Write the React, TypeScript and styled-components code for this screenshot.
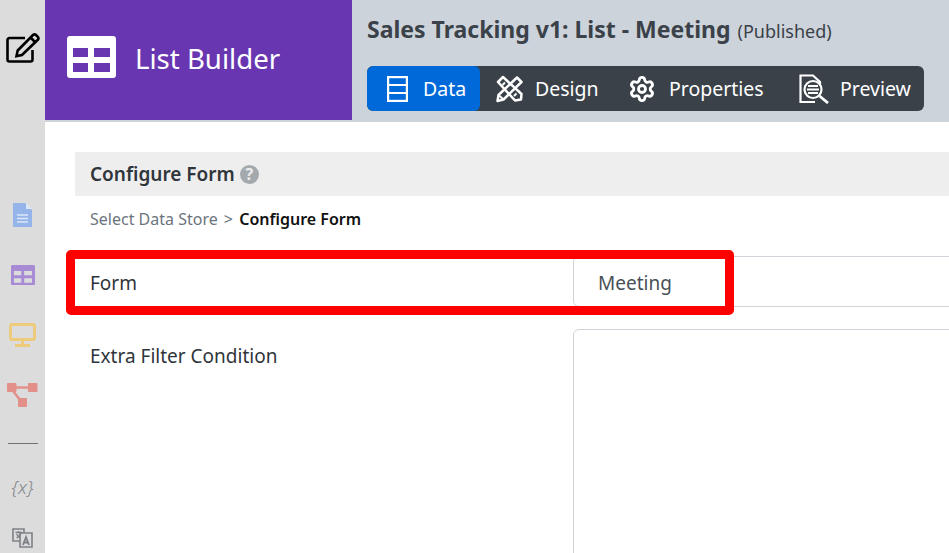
import React from 'react'
import styled, { createGlobalStyle } from 'styled-components'
import { Settings } from 'lucide-react'

const GlobalStyle = createGlobalStyle`
    html, body {
        margin: 0;
        padding: 0;
        height: 100%;
        overflow: hidden;
        background: #fff;
        font-family: 'Noto Sans', 'Open Sans', Arial, sans-serif;
    }
    * {
        box-sizing: border-box;
    }
`

const tabs = [
    { id: 'data', title: 'Data', width: 113, pad: 20, gap: 15, active: true },
    { id: 'design', title: 'Design', width: 135, pad: 16, gap: 12 },
    { id: 'properties', title: 'Properties', width: 163, pad: 13, gap: 13 },
    { id: 'preview', title: 'Preview', width: 146, pad: 21, gap: 10 },
]

const TableGlyph = ({ width, color }: { width: number; color: string }) => (
    <svg width={width} height={(width * 42) / 49} viewBox="0 0 49 42">
        <path
            fill={color}
            fillRule="evenodd"
            d="M3 0h43a3 3 0 0 1 3 3v36a3 3 0 0 1-3 3H3a3 3 0 0 1-3-3V3a3 3 0 0 1 3-3zM6 12v9h15v-9zM27 12v9h16v-9zM6 27v9h15v-9zM27 27v9h16v-9z"
        />
    </svg>
)

const TabIcon = ({ id }: { id: string }) => {
    if (id === 'data') {
        return (
            <svg width="21" height="26" viewBox="0 0 21 26" fill="none" stroke="#fff" strokeWidth="2.2">
                <rect x="1.100" y="1.100" width="18.800" height="23.800" />
                <path d="M1 9h19M1 17h19" />
            </svg>
        )
    }
    if (id === 'design') {
        return (
            <svg width="27" height="28" viewBox="0 0 27 28" fill="none" stroke="#fff" strokeWidth="2.500" strokeLinejoin="round">
                <path d="M7 2 2 7l17 18.500 6-1 .5-5.500z" />
                <path d="M21 2.500 25.500 7 7.500 24.500 1.500 26l1-6z" />
                <path d="M6.500 10l2.500-2.500M18 21l2.500-2.500M2.500 20l5 4.500" strokeWidth="2" />
            </svg>
        )
    }
    if (id === 'properties') {
        return <Settings size={28} color="#fff" strokeWidth={2.4} />
    }
    return (
        <svg width="31" height="30" viewBox="0 0 31 30" fill="none" stroke="#fff" strokeWidth="2.200">
            <path d="M16 28H1.500V1.500H14l7 6.500v3" />
            <circle cx="14" cy="15.500" r="8.500" />
            <path d="M9 12h10M8 15.500h12M9 19h10" strokeWidth="2" />
            <path d="M20.500 22l8.500 7" strokeWidth="2.800" />
        </svg>
    )
}

const App: React.FC = () => {
    return (
        <Page>
            <GlobalStyle />
            <Sidebar>
                <EditSlot>
                    <svg width="34" height="31" viewBox="0 0 34 31" fill="none" stroke="#000" strokeWidth="2.600">
                        <path d="M26.500 18v9.500a2 2 0 0 1-2 2H3.500a2 2 0 0 1-2-2V8a2 2 0 0 1 2-2H19" />
                        <path d="M10.500 24l1.200-5.500L27 3a2.200 2.200 0 0 1 3 0l1.800 1.800a2.200 2.200 0 0 1 0 3L16 23z" />
                        <path d="M24.500 5.500l4.500 4.500" />
                    </svg>
                </EditSlot>
                <SideItems>
                    <SideSlot>
                        <svg width="19" height="24" viewBox="0 0 19 24">
                            <path fill="#94b4ea" d="M0 0h12l7 7v17H0z" />
                            <path fill="#dbe6f8" d="M13 0l6 6h-6z" />
                            <path stroke="#dbe6f8" strokeWidth="1.300" d="M4 12h11M4 15.500h11M4 19h11" />
                        </svg>
                    </SideSlot>
                    <SideSlot>
                        <TableGlyph width={24} color="#a88bd5" />
                    </SideSlot>
                    <SideSlot>
                        <svg width="27" height="24" viewBox="0 0 27 24" fill="none" stroke="#eecb7c" strokeWidth="3">
                            <rect x="1.500" y="1.500" width="24" height="15" rx="1.500" />
                            <path d="M13.500 17v5M6 22.500h15" />
                        </svg>
                    </SideSlot>
                    <SideSlot>
                        <svg width="31" height="24" viewBox="0 0 31 24">
                            <g fill="#e29089">
                                <rect x="0" y="0" width="9.500" height="9" rx="1" />
                                <rect x="21" y="0" width="9.500" height="9" rx="1" />
                                <rect x="11" y="15" width="9" height="9" rx="1" />
                            </g>
                            <path stroke="#e29089" strokeWidth="2.500" d="M8 4.500h14M6 8l7 9" />
                        </svg>
                    </SideSlot>
                </SideItems>
                <SideRule />
                <VariableMark>{'{x}'}</VariableMark>
                <TranslateSlot>
                    <svg width="21" height="20" viewBox="0 0 21 20" fill="none" stroke="#7d8186" strokeWidth="1.600">
                        <path d="M1 1h11v12H1z" />
                        <path d="M8 5h12v14H8z" fill="#dcdcdc" />
                        <path d="M3.500 4.500h6.500M6.500 3v1.500M9 4.500c-.5 2.500-2.500 4.500-4.500 5.500M4.500 6c1 2 2.500 3 4 3.500" strokeWidth="1.300" />
                        <path d="M11 17l3-8 3 8M12.200 14.500h3.600" strokeWidth="1.800" />
                    </svg>
                </TranslateSlot>
            </Sidebar>
            <Workspace>
                <Header>
                    <Brand>
                        <TableGlyph width={49} color="#fff" />
                        <BrandName>List Builder</BrandName>
                    </Brand>
                    <HeaderMain>
                        <TitleLine>
                            <Title>Sales Tracking v1: List - Meeting</Title>
                            <Status>(Published)</Status>
                        </TitleLine>
                        <TabBar>
                            {tabs.map((tab) => (
                                <Tab key={tab.id} $active={tab.active} $width={tab.width} $pad={tab.pad} $gap={tab.gap}>
                                    <TabIcon id={tab.id} />
                                    {tab.title}
                                </Tab>
                            ))}
                        </TabBar>
                    </HeaderMain>
                </Header>
                <Content>
                    <SectionBar>
                        Configure Form
                        <HelpBadge>?</HelpBadge>
                    </SectionBar>
                    <Crumbs>
                        Select Data Store <CrumbArrow>&gt;</CrumbArrow> <CrumbCurrent>Configure Form</CrumbCurrent>
                    </Crumbs>
                    <FormRow>
                        <FieldLabel>Form</FieldLabel>
                        <InputBox>Meeting</InputBox>
                    </FormRow>
                    <FilterRow>
                        <FieldLabel>Extra Filter Condition</FieldLabel>
                        <AreaBox />
                    </FilterRow>
                </Content>
            </Workspace>
            <Highlight />
        </Page>
    )
}

export default App

const Page = styled.div`
    position: relative;
    display: flex;
    width: 949px;
    height: 553px;
    overflow: hidden;
    background: #fff;
`
const Sidebar = styled.aside`
    flex: 0 0 45px;
    display: flex;
    flex-direction: column;
    align-items: center;
    background: #dcdcdc;
`
const EditSlot = styled.div`
    display: flex;
    align-items: center;
    justify-content: center;
    flex-shrink: 0;
    height: 31px;
    width: 45px;
    margin-top: 32px;
`
const SideItems = styled.div`
    display: flex;
    flex-direction: column;
    flex-shrink: 0;
    margin-top: 140px;
    gap: 36px;
`
const SideSlot = styled.div`
    display: flex;
    align-items: center;
    justify-content: center;
    height: 24px;
`
const SideRule = styled.hr`
    flex-shrink: 0;
    width: 30px;
    height: 1px;
    margin: 36px 0 0;
    border: 0;
    background: #6f7276;
`
const VariableMark = styled.div`
    flex-shrink: 0;
    margin-top: 32px;
    font-family: 'Noto Sans', sans-serif;
    font-style: italic;
    font-weight: 300;
    font-size: 19px;
    line-height: 22px;
    color: #85898d;
`
const TranslateSlot = styled.div`
    display: flex;
    justify-content: center;
    flex-shrink: 0;
    margin-top: 30px;
`
const Workspace = styled.div`
    flex: 1;
    min-width: 0;
    display: flex;
    flex-direction: column;
`
const Header = styled.header`
    display: flex;
    flex-shrink: 0;
    height: 122px;
    background: #ccd3da;
`
const Brand = styled.div`
    display: flex;
    align-items: center;
    gap: 19px;
    width: 307px;
    height: 120px;
    padding-left: 22px;
    padding-bottom: 6px;
    background: #6836b1;
`
const BrandName = styled.span`
    font-size: 27.600px;
    line-height: 40px;
    padding-top: 2px;
    color: #fff;
`
const HeaderMain = styled.div`
    display: flex;
    flex-direction: column;
    padding: 12px 0 0 15px;
`
const TitleLine = styled.div`
    display: flex;
    align-items: baseline;
    gap: 7px;
    height: 34px;
    color: #3a4149;
`
const Title = styled.span`
    font-size: 23px;
    font-weight: 700;
    line-height: 34px;
`
const Status = styled.span`
    font-size: 18px;
`
const TabBar = styled.nav`
    display: flex;
    width: 557px;
    height: 45px;
    margin-top: 20px;
    border-radius: 6px;
    background: #3a4149;
    overflow: hidden;
`
const Tab = styled.div<{ $active?: boolean; $width: number; $pad: number; $gap: number }>`
    display: flex;
    align-items: center;
    gap: ${(p) => p.$gap}px;
    width: ${(p) => p.$width}px;
    padding-left: ${(p) => p.$pad}px;
    border-radius: 6px;
    background: ${(p) => (p.$active ? '#0069d9' : 'transparent')};
    color: #fff;
    font-size: 19.500px;
`
const Content = styled.main`
    display: flex;
    flex-direction: column;
    padding: 30px 0 0 30px;
`
const SectionBar = styled.div`
    display: flex;
    align-items: center;
    gap: 5px;
    height: 44px;
    padding-left: 15px;
    background: #eee;
    color: #2f353b;
    font-size: 19px;
    font-weight: 600;
`
const HelpBadge = styled.span`
    display: flex;
    align-items: center;
    justify-content: center;
    width: 19px;
    height: 19px;
    border-radius: 50%;
    background: #a4a9ae;
    color: #eee;
    font-size: 16px;
    font-weight: 700;
`
const Crumbs = styled.div`
    height: 60px;
    padding: 12px 0 0 15px;
    color: #6c757d;
    font-size: 16px;
    line-height: 22px;
`
const CrumbArrow = styled.span`
    margin: 0 2px;
`
const CrumbCurrent = styled.span`
    color: #111;
    font-weight: 600;
`
const FormRow = styled.div`
    display: flex;
    flex-shrink: 0;
    height: 51px;
`
const FilterRow = styled.div`
    display: flex;
    flex-shrink: 0;
    margin-top: 22px;
`
const FieldLabel = styled.label`
    flex: 0 0 498px;
    padding: 14px 0 0 15px;
    color: #2f353b;
    font-size: 19px;
    line-height: 26px;
`
const InputBox = styled.div`
    flex: 0 0 400px;
    padding: 13px 0 0 24px;
    border: 1px solid #ced4da;
    border-radius: 6px 0 0 6px;
    color: #495057;
    font-size: 19px;
    line-height: 26px;
`
const AreaBox = styled.div`
    flex: 0 0 400px;
    height: 260px;
    border: 1px solid #ced4da;
    border-radius: 6px;
`
const Highlight = styled.div`
    position: absolute;
    left: 66px;
    top: 250px;
    width: 668px;
    height: 65px;
    border: 9px solid #ff0000;
    border-radius: 5px;
`
